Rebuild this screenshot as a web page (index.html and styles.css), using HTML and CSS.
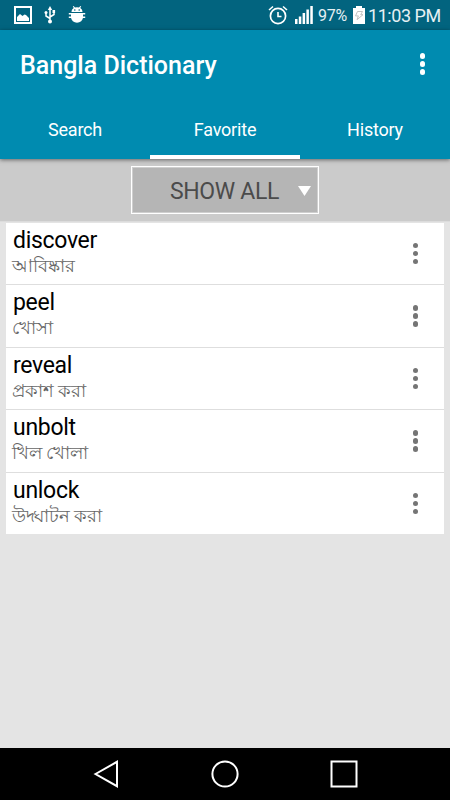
FILE: index.html
```html
<!DOCTYPE html>
<html lang="en">
<head>
  <meta charset="UTF-8" />
  <meta name="viewport" content="width=device-width, initial-scale=1.0"/>
  <title>Bangla Dictionary</title>
  <link rel="stylesheet" href="styles.css">
</head>
<body>
  <div class="status-bar">
    <svg class="icon-picture" width="18" height="18" viewBox="0 0 18 18">
      <rect x="1" y="1" width="16" height="16" fill="none" stroke="#fff" stroke-width="2"/>
      <path d="M3 15V11l3-3 2.500 2 2-1.500L12 9l3 3v3z" fill="#fff"/>
    </svg>
    <svg class="icon-usb" width="12" height="18" viewBox="0 0 12 18">
      <path d="M6 3v12M6 12.500L2 10V7M6 11l4-2.500V5" fill="none" stroke="#fff" stroke-width="1.500"/>
      <path d="M6 0l2.200 4H3.800z" fill="#fff"/>
      <circle cx="2" cy="6.500" r="1.500" fill="#fff"/>
      <circle cx="6" cy="15.500" r="2" fill="#fff"/>
      <path d="M8.500 4h2.600v3H8.500z" fill="#fff"/>
    </svg>
    <svg class="icon-bug" width="18" height="18" viewBox="0 0 18 18">
      <path d="M3.500 6c0-2 1-3.300 2.300-4L4.800.6l.8-.6L7 1.500a6 6 0 0 1 4 0L12.400 0l.8.6-1 1.400c1.300.7 2.300 2 2.300 4z" fill="#fff"/>
      <path d="M3 7h12v4c0 3.500-3 5.700-6 5.700S3 14.500 3 11z" fill="#fff"/>
      <path d="M.8 7.700h16.400M.8 11.300h16.400" stroke="#fff" stroke-width="1.400"/>
      <circle cx="6.800" cy="4" r=".8" fill="#02647f"/>
      <circle cx="11.200" cy="4" r=".8" fill="#02647f"/>
    </svg>
    <span class="spacer"></span>
    <svg class="icon-alarm" width="20" height="20" viewBox="0 0 20 20">
      <circle cx="10" cy="11" r="7.600" fill="none" stroke="#fff" stroke-width="1.700"/>
      <path d="M10 7v4.500h3.500M1 5l4-3.500M19 5l-4-3.500" fill="none" stroke="#fff" stroke-width="1.600"/>
    </svg>
    <svg class="icon-signal" width="18" height="18" viewBox="0 0 18 18">
      <path d="M0 13h2.500v5H0zM3.800 10.500h2.500V18H3.800zM7.600 7h2.500v11H7.600zM11.400 3.500h2.500V18h-2.500zM15.300 0h2.500v18h-2.500z" fill="#fff"/>
    </svg>
    <span class="battery-level">97%</span>
    <svg class="icon-battery" width="12" height="18" viewBox="0 0 12 18">
      <path d="M3 0h6v2h3v16H0V2h3z" fill="#fff"/>
      <path d="M4.500 5.500h5L7.700 8.700h2.300l-6 5 1.400-3.800H2.500z" fill="none" stroke="#bbb" stroke-width=".9"/>
    </svg>
    <span class="clock">11:03 PM</span>
  </div>

  <div class="app-header">
    <div class="toolbar">
      <h1>Bangla Dictionary</h1>
      <div class="dots dots-light"><i></i><i></i><i></i></div>
    </div>
    <div class="tabs">
      <div class="tab"><span>Search</span></div>
      <div class="tab active"><span>Favorite</span></div>
      <div class="tab"><span>History</span></div>
    </div>
  </div>

  <div class="filter-bar">
    <div class="dropdown">
      <span class="dropdown-label">SHOW ALL</span>
      <svg class="arrow" width="13" height="10" viewBox="0 0 13 10"><path d="M0 0h13L6.500 10z" fill="#fff"/></svg>
    </div>
  </div>

  <!-- Favorite words -->
  <div class="word-list">
    <div class="word-row">
      <div>
        <div class="word">discover</div>
        <div class="meaning" lang="bn">আবিষ্কার</div>
      </div>
      <div class="dots"><i></i><i></i><i></i></div>
    </div>
    <div class="word-row">
      <div>
        <div class="word">peel</div>
        <div class="meaning" lang="bn">খোসা</div>
      </div>
      <div class="dots"><i></i><i></i><i></i></div>
    </div>
    <div class="word-row">
      <div>
        <div class="word">reveal</div>
        <div class="meaning" lang="bn">প্রকাশ করা</div>
      </div>
      <div class="dots"><i></i><i></i><i></i></div>
    </div>
    <div class="word-row">
      <div>
        <div class="word">unbolt</div>
        <div class="meaning" lang="bn">খিল খোলা</div>
      </div>
      <div class="dots"><i></i><i></i><i></i></div>
    </div>
    <div class="word-row">
      <div>
        <div class="word">unlock</div>
        <div class="meaning" lang="bn">উদ্ঘাটন করা</div>
      </div>
      <div class="dots"><i></i><i></i><i></i></div>
    </div>
  </div>

  <!-- Navigation bar -->
  <div class="nav-bar">
    <svg width="28" height="28" viewBox="0 0 28 28"><path d="M3.500 14L25 1.800v24.400z" fill="none" stroke="#fff" stroke-width="2"/></svg>
    <svg width="28" height="28" viewBox="0 0 28 28"><circle cx="14" cy="14" r="12.600" fill="none" stroke="#fff" stroke-width="2"/></svg>
    <svg width="28" height="28" viewBox="0 0 28 28"><rect x="1.500" y="1.500" width="25" height="25" fill="none" stroke="#fff" stroke-width="2"/></svg>
  </div>
</body>
</html>
```

FILE: styles.css
```css
* {
  box-sizing: border-box;
}

body {
  margin: 0;
  height: 800px;
  display: flex;
  flex-direction: column;
  overflow: hidden;
  font-family: Roboto, "Noto Sans", sans-serif;
  background: #e4e4e4;
}

svg {
  display: block;
  flex: none;
}

.status-bar {
  height: 30px;
  flex: none;
  display: flex;
  align-items: center;
  padding: 0 9px 0 14px;
  background: #02647f;
  color: #e6f0f3;
  white-space: nowrap;
}

.icon-usb {
  margin-left: 12px;
}

.icon-bug {
  margin-left: 12px;
}

.spacer {
  flex: 1;
}

.icon-signal {
  margin-left: 7px;
}

.battery-level {
  width: 30px;
  margin-left: 5px;
  padding-top: 1px;
  font-size: 16px;
  letter-spacing: -0.3px;
}

.icon-battery {
  margin-left: 5px;
}

.clock {
  width: 73px;
  margin-left: 3px;
  padding-top: 2px;
  font-size: 18px;
  letter-spacing: -0.45px;
  line-height: 30px;
}

.app-header {
  height: 129px;
  flex: none;
  position: relative;
  background: #008bb0;
  color: #fff;
  box-shadow: 0 1px 4px rgba(0, 0, 0, 0.5);
}

.toolbar {
  height: 70px;
  display: flex;
  align-items: center;
  justify-content: space-between;
  padding: 0 25px 0 20px;
}

.toolbar h1 {
  margin: 0;
  font-size: 25px;
  font-weight: 500;
}

.tabs {
  height: 59px;
  display: flex;
}

.tab {
  flex: 1;
  display: flex;
  align-items: center;
  justify-content: center;
  padding-top: 4px;
  font-size: 18px;
  letter-spacing: -0.2px;
  border-bottom: 4px solid transparent;
}

.tab.active {
  border-bottom-color: #fff;
}

.filter-bar {
  height: 63px;
  flex: none;
  padding-top: 7px;
  background: #cbcbcb;
  border-bottom: 1px solid #dcdcdc;
}

.dropdown {
  width: 188px;
  height: 48px;
  margin: 0 auto;
  display: flex;
  align-items: center;
  padding: 0 7px 0 37px;
  background: #b5b5b5;
  border: 1px solid #fff;
  box-shadow: inset 0 0 0 1px #cfcfcf;
}

.dropdown-label {
  flex: 1;
  padding: 2px 0 0 1px;
  font-size: 23px;
  letter-spacing: -0.35px;
  color: #4b4b4b;
  white-space: nowrap;
}

.arrow {
  margin-top: 1px;
}

.word-list {
  padding: 0.5px 6px 0;
  flex: 1;
}

.word-row {
  height: 62.5px;
  display: flex;
  justify-content: space-between;
  padding: 0 26px 0 7px;
  background: #fff;
  border-bottom: 1px solid #dedede;
}

.word-row:last-child {
  height: 61.5px;
  border-bottom: none;
}

.word {
  height: 31px;
  line-height: 35px;
  font-size: 23px;
  letter-spacing: -0.3px;
  color: #000;
}

.meaning {
  margin-left: -1px;
  line-height: 24px;
  font-size: 18px;
  color: #666;
  white-space: nowrap;
}

.dots {
  display: flex;
  flex-direction: column;
  align-items: center;
  justify-content: center;
  gap: 2.5px;
}

.dots i {
  width: 5.5px;
  height: 5.5px;
  border-radius: 50%;
  background: #757575;
}

.dots-light {
  margin-top: -2px;
}

.dots-light i {
  background: #fff;
}

.nav-bar {
  height: 52px;
  flex: none;
  display: flex;
  align-items: center;
  justify-content: space-between;
  padding: 0 92px;
  background: #000;
}
```
